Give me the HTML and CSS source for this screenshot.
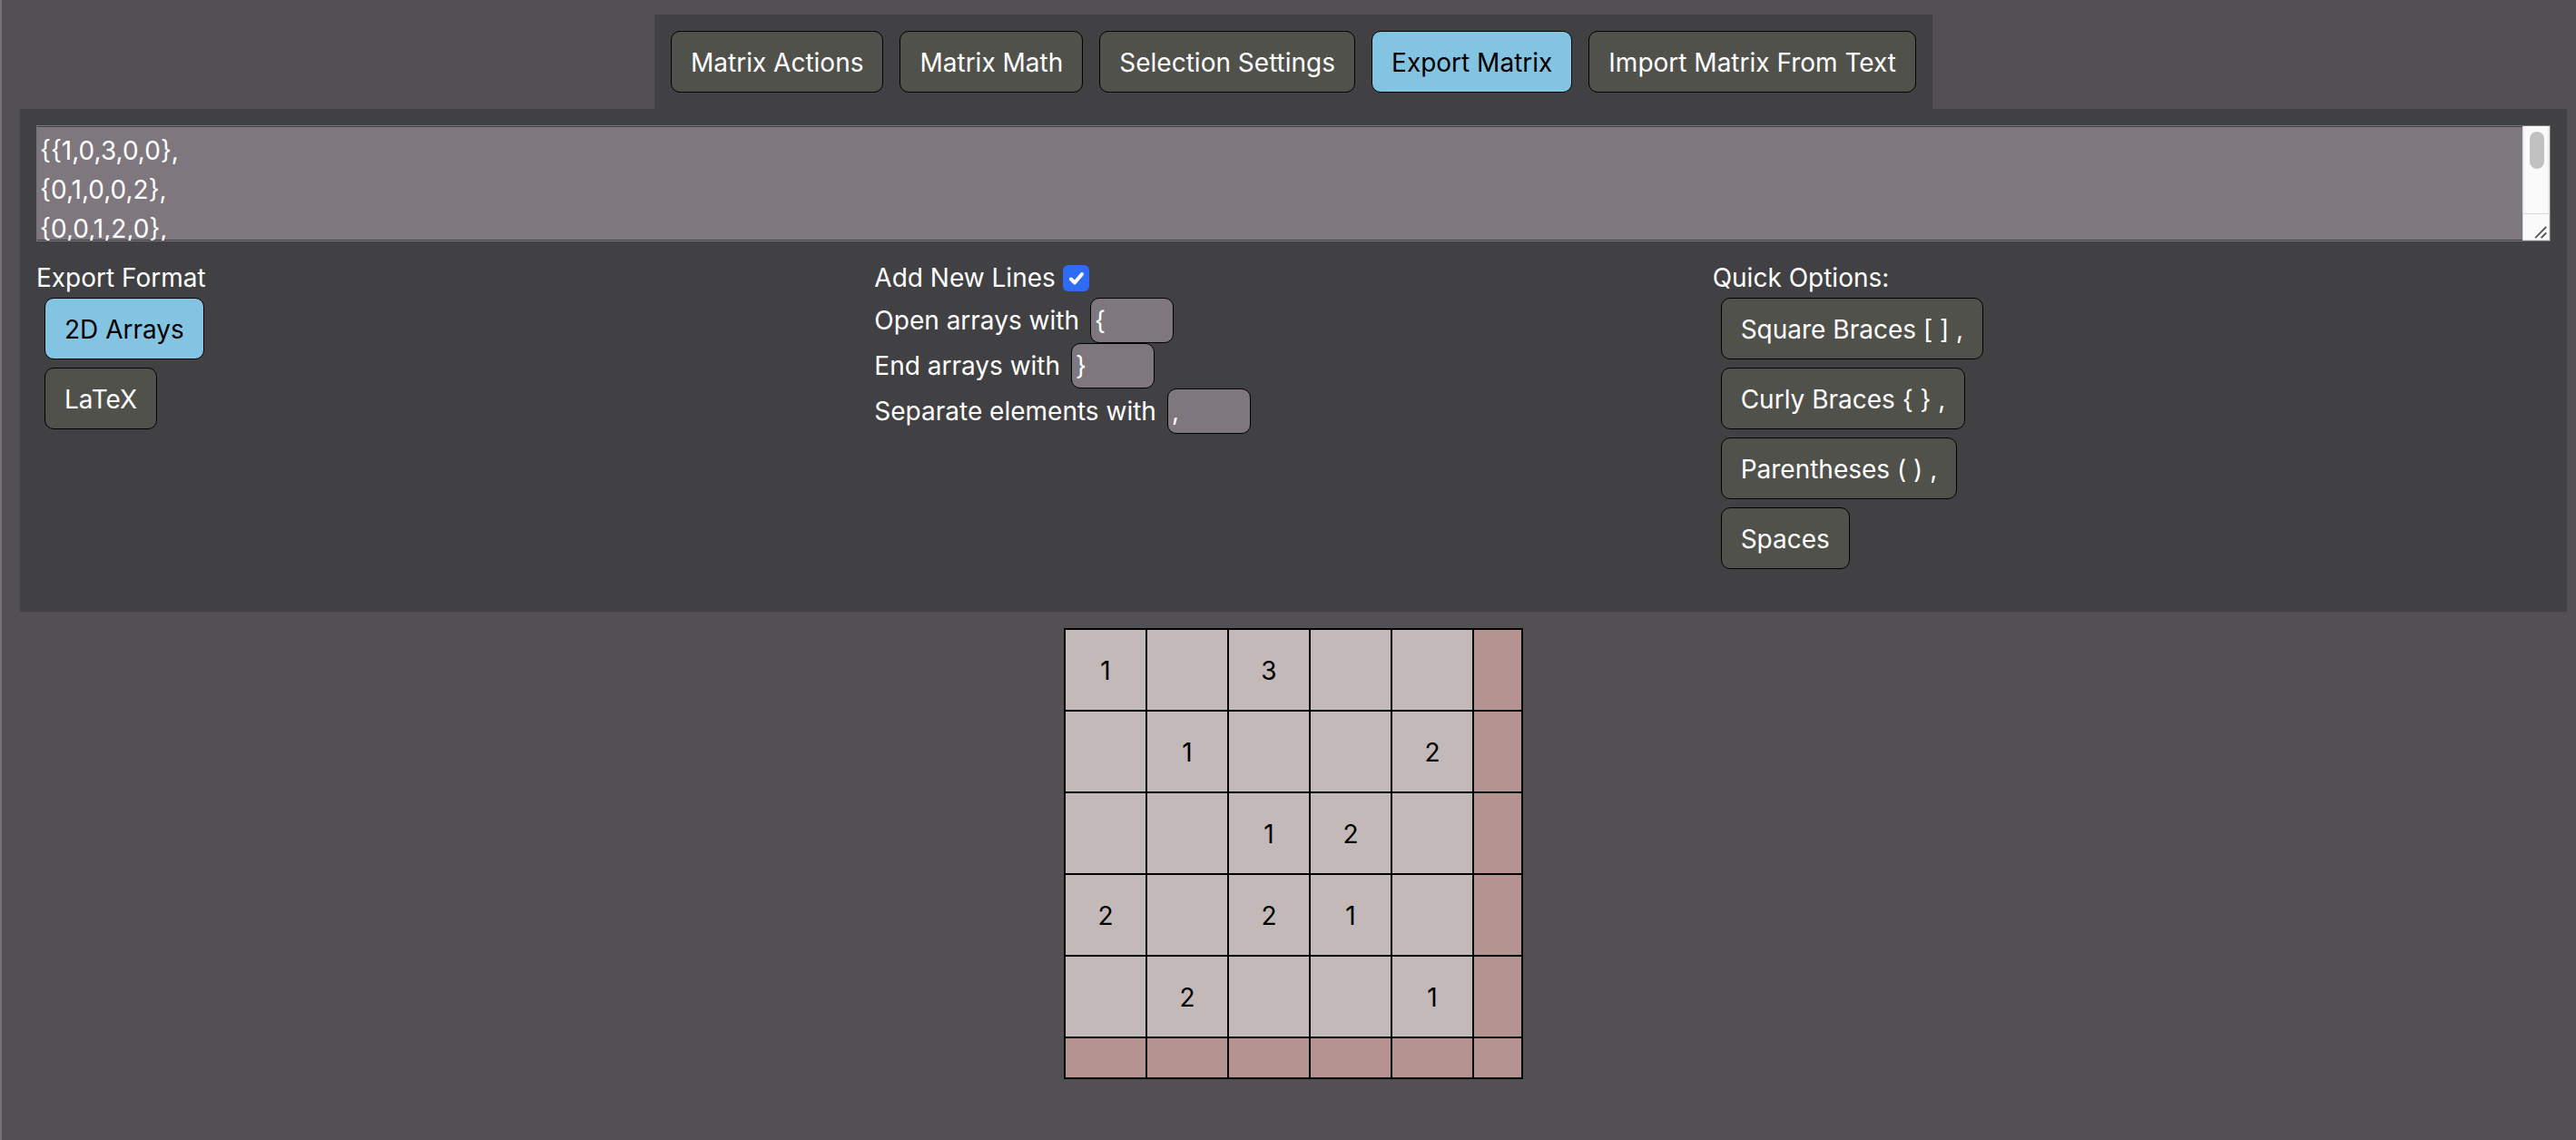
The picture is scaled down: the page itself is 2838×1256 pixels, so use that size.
FILE: index.html
```html
<!DOCTYPE html>
<html lang="en">
<head>
<meta charset="utf-8">
<title>Matrix Editor</title>
<link rel="stylesheet" href="styles.css">
</head>
<body>
<nav class="tabs">
  <button type="button" class="btn">Matrix Actions</button>
  <button type="button" class="btn">Matrix Math</button>
  <button type="button" class="btn">Selection Settings</button>
  <button type="button" class="btn active">Export Matrix</button>
  <button type="button" class="btn">Import Matrix From Text</button>
</nav>
<main>
  <section class="panel">
    <div class="output-wrap">
      <textarea class="output" aria-label="Exported matrix" spellcheck="false" readonly>{{1,0,3,0,0},
{0,1,0,0,2},
{0,0,1,2,0},
{2,0,2,1,0},
{0,2,0,0,1}}</textarea>
      <div class="scrollbar" aria-hidden="true">
        <div class="track"><div class="thumb"></div></div>
        <svg class="resizer" viewBox="0 0 30 30"><path d="M14 28L27 15M21 28L27 22"/></svg>
      </div>
    </div>
    <div class="options">
      <div class="column">
        <div>Export Format</div>
        <div class="stack">
          <button type="button" class="btn active">2D Arrays</button>
          <button type="button" class="btn">LaTeX</button>
        </div>
      </div>
      <div class="column">
        <div class="check-row">
          <label for="new-lines">Add New Lines</label>
          <span class="check">
            <input type="checkbox" id="new-lines" checked>
            <svg class="tick" viewBox="0 0 29 29" aria-hidden="true"><path d="M9 15.500l4 4L21 10"/></svg>
          </span>
        </div>
        <div class="field">
          <label for="open-with">Open arrays with</label>
          <input type="text" id="open-with" value="{">
        </div>
        <div class="field">
          <label for="end-with">End arrays with</label>
          <input type="text" id="end-with" value="}">
        </div>
        <div class="field">
          <label for="separate-with">Separate elements with</label>
          <input type="text" id="separate-with" value=",">
        </div>
      </div>
      <div class="column">
        <div>Quick Options:</div>
        <div class="stack">
          <button type="button" class="btn">Square Braces [ ] ,</button>
          <button type="button" class="btn">Curly Braces { } ,</button>
          <button type="button" class="btn">Parentheses ( ) ,</button>
          <button type="button" class="btn">Spaces</button>
        </div>
      </div>
    </div>
  </section>
  <table class="matrix">
    <tbody>
      <tr><td>1</td><td></td><td>3</td><td></td><td></td><td class="extra"></td></tr>
      <tr><td></td><td>1</td><td></td><td></td><td>2</td><td class="extra"></td></tr>
      <tr><td></td><td></td><td>1</td><td>2</td><td></td><td class="extra"></td></tr>
      <tr><td>2</td><td></td><td>2</td><td>1</td><td></td><td class="extra"></td></tr>
      <tr><td></td><td>2</td><td></td><td></td><td>1</td><td class="extra"></td></tr>
      <tr class="extra-row"><td></td><td></td><td></td><td></td><td></td><td class="extra"></td></tr>
    </tbody>
  </table>
</main>
</body>
</html>
```
FILE: styles.css
```css
* {
  box-sizing: border-box;
}

body {
  margin: 0;
  min-height: 100vh;
  padding: 16px 10px 0 20px;
  border-left: 2px solid #727174;
  background: #525053;
  color: #fff;
  font: 28px/43px Inter, "Liberation Sans", sans-serif;
}

button,
input,
textarea {
  font: inherit;
  color: inherit;
}

.tabs {
  display: flex;
  gap: 18px;
  width: fit-content;
  margin: 0 auto;
  padding: 18px;
  background: #414143;
}

.btn {
  height: 68px;
  padding: 2px 21px 0;
  border: 1px solid #000;
  border-radius: 10px;
  background: #50514a;
  white-space: nowrap;
}

.btn.active {
  background: #84c4e3;
  color: #000;
}

.panel {
  padding: 18px 18px 47px;
  background: #414143;
}

.output-wrap {
  position: relative;
}

.output {
  display: block;
  width: 100%;
  height: 128px;
  padding: 6px 34px 6px 3px;
  border: 1px solid #767676;
  border-radius: 0;
  outline: none;
  background: #7e787e;
  box-shadow: inset 0 1px #414143, inset 0 -1px #414143;
  overflow-y: scroll;
  scrollbar-width: none;
  resize: none;
}

/* Scrollbar gutter laid over the right end of the text box */
.scrollbar {
  position: absolute;
  top: 1px;
  right: 1px;
  bottom: 1px;
  display: flex;
  flex-direction: column;
  width: 30px;
  pointer-events: none;
}

.track {
  flex: 1;
  padding: 6px;
  border: solid #e8e8e8;
  border-width: 0 2px;
  background: #fafafa;
}

.thumb {
  width: 16px;
  height: 41px;
  border-radius: 8px;
  background: #c1c1c1;
}

.resizer {
  width: 30px;
  height: 30px;
  border: 1px solid #d9d9d9;
  background: #fafafa;
  fill: none;
  stroke: #555;
  stroke-width: 2;
}

.options {
  display: grid;
  grid-template-columns: repeat(3, 1fr);
  padding-top: 19px;
}

.stack {
  display: flex;
  flex-direction: column;
  align-items: flex-start;
  gap: 9px;
  padding-left: 9px;
}

.check-row,
.field {
  display: flex;
  align-items: center;
}

.check-row {
  gap: 8px;
}

.check {
  display: grid;
}

.check input,
.tick {
  grid-area: 1 / 1;
  width: 29px;
  height: 29px;
  margin: 0;
}

.check input {
  appearance: none;
  border-radius: 6px;
  background: #85858a;
}

.check input:checked {
  background: #2f6cf6;
}

.tick {
  fill: none;
  stroke: #fff;
  stroke-width: 4;
  stroke-linecap: round;
  stroke-linejoin: round;
  pointer-events: none;
}

.field {
  gap: 12px;
}

.field input {
  width: 92px;
  height: 50px;
  padding: 0 4px;
  border: 1px solid #000;
  border-radius: 10px;
  background: #7e787e;
}

.matrix {
  margin: 18px auto 0;
  border-spacing: 2px;
  background: #000;
  color: #000;
  text-align: center;
}

.matrix td {
  width: 88px;
  height: 88px;
  padding: 2px 0 0;
  background: #c3b9b8;
}

.matrix .extra {
  width: 52px;
}

.matrix .extra-row td {
  height: 43px;
}

.matrix .extra,
.matrix .extra-row td {
  background: #b59390;
}
```
